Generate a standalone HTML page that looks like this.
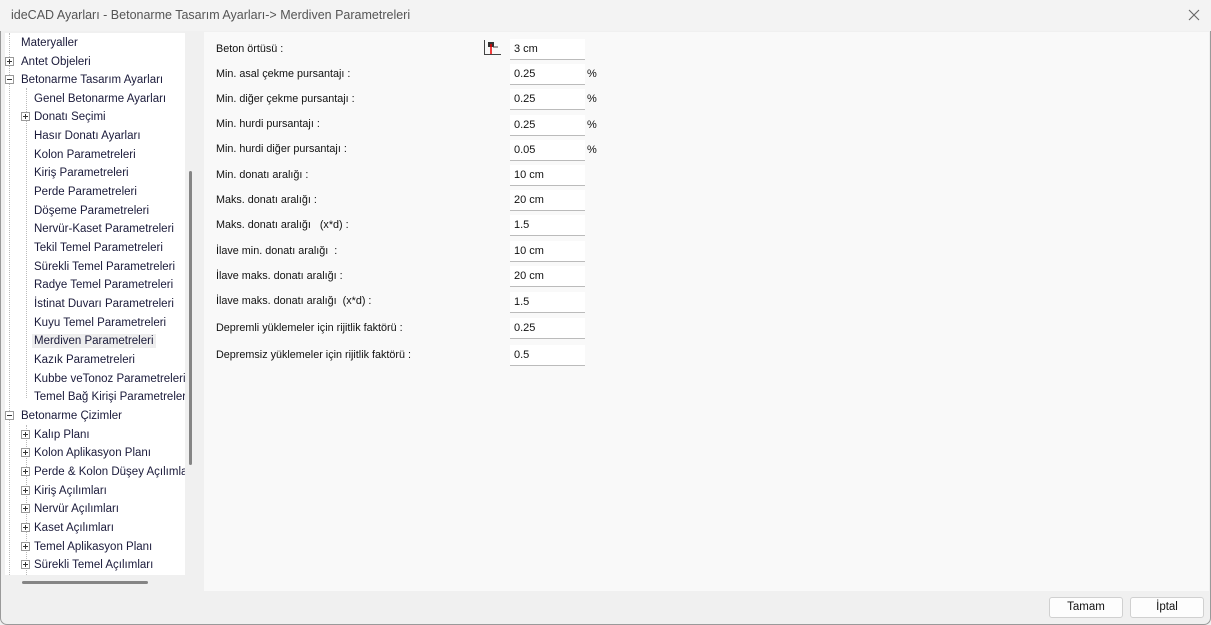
<!DOCTYPE html><html><head><style>
*{margin:0;padding:0;box-sizing:border-box}
body{width:1211px;height:625px;background:#f0f0f0;font-family:"Liberation Sans",sans-serif;position:relative;overflow:hidden;border:1px solid #9a9a9a;border-radius:7px}
#w{position:absolute;left:1px;top:1px;width:1px;height:1px}
.t{position:absolute;white-space:nowrap}
#title{position:absolute;left:-2px;top:-2px;width:1211px;height:31px;background:#f3f3f3}
#tree{position:absolute;left:3px;top:31px;width:180px;height:542px;background:#fff;overflow:hidden;font-size:11.5px;color:#1a1a3a}
#right{position:absolute;left:202px;top:30px;width:1005px;height:559px;background:#f9f9f9}
.ti{position:absolute;white-space:nowrap;margin-top:2px}
.pm{position:absolute;width:9px;height:9px;border:1px solid #999;background:#fff;font-size:0}
.pm:before{content:"";position:absolute;left:1px;top:3px;width:5px;height:1px;background:#333}
.pm.p:after{content:"";position:absolute;left:3px;top:1px;width:1px;height:5px;background:#333}
.lbl{position:absolute;left:214px;font-size:10.8px;color:#111;white-space:nowrap}
.inp{position:absolute;left:508px;width:75px;height:21px;background:#fff;border-bottom:1px solid #bbb;font-size:11px;padding:4px 0 0 4px;color:#111}
.pc{position:absolute;left:585px;font-size:11px;color:#111}
.btn{position:absolute;top:595px;width:74px;height:21px;background:#fdfdfd;border:1px solid #d0d0d0;border-radius:3px;font-size:11.5px;text-align:center;line-height:19px;color:#111}
</style></head><body><div id="w">
<div id="title"><div class="t" style="left:11px;top:8px;font-size:12.5px;color:#555">ideCAD Ayarları - Betonarme Tasarım Ayarları-&gt; Merdiven Parametreleri</div>
<svg style="position:absolute;left:1188px;top:9px" width="12" height="12"><path d="M1 1L11 11M11 1L1 11" stroke="#666" stroke-width="1.1"/></svg></div>
<div id="tree">
<div style="position:absolute;left:4px;top:0;height:542px;border-left:1px dotted #bbb"></div>
<div style="position:absolute;left:21px;top:55px;height:310px;border-left:1px dotted #bbb"></div>
<div style="position:absolute;left:21px;top:392px;height:150px;border-left:1px dotted #bbb"></div>
<div class="ti" style="left:16px;top:2px">Materyaller</div>
<div class="pm p" style="left:0;top:24px"></div><div class="ti" style="left:16px;top:21px">Antet Objeleri</div>
<div class="pm" style="left:0;top:42px"></div><div class="ti" style="left:16px;top:39px">Betonarme Tasarım Ayarları</div>
<div class="ti" style="left:29px;top:58px">Genel Betonarme Ayarları</div>
<div class="pm p" style="left:16px;top:79px"></div><div class="ti" style="left:29px;top:76px">Donatı Seçimi</div>
<div class="ti" style="left:29px;top:95px">Hasır Donatı Ayarları</div>
<div class="ti" style="left:29px;top:114px">Kolon Parametreleri</div>
<div class="ti" style="left:29px;top:132px">Kiriş Parametreleri</div>
<div class="ti" style="left:29px;top:151px">Perde Parametreleri</div>
<div class="ti" style="left:29px;top:170px">Döşeme Parametreleri</div>
<div class="ti" style="left:29px;top:188px">Nervür-Kaset Parametreleri</div>
<div class="ti" style="left:29px;top:207px">Tekil Temel Parametreleri</div>
<div class="ti" style="left:29px;top:226px">Sürekli Temel Parametreleri</div>
<div class="ti" style="left:29px;top:244px">Radye Temel Parametreleri</div>
<div class="ti" style="left:29px;top:263px">İstinat Duvarı Parametreleri</div>
<div class="ti" style="left:29px;top:282px">Kuyu Temel Parametreleri</div>
<div class="ti" style="left:27px;top:299px;background:#eee;padding:1px 2px">Merdiven Parametreleri</div>
<div class="ti" style="left:29px;top:319px">Kazık Parametreleri</div>
<div class="ti" style="left:29px;top:338px">Kubbe veTonoz Parametreleri</div>
<div class="ti" style="left:29px;top:356px">Temel Bağ Kirişi Parametreleri</div>
<div class="pm" style="left:0;top:378px"></div><div class="ti" style="left:16px;top:375px">Betonarme Çizimler</div>
<div class="pm p" style="left:16px;top:397px"></div><div class="ti" style="left:29px;top:394px">Kalıp Planı</div>
<div class="pm p" style="left:16px;top:415px"></div><div class="ti" style="left:29px;top:412px">Kolon Aplikasyon Planı</div>
<div class="pm p" style="left:16px;top:434px"></div><div class="ti" style="left:29px;top:431px">Perde &amp; Kolon Düşey Açılımları</div>
<div class="pm p" style="left:16px;top:453px"></div><div class="ti" style="left:29px;top:450px">Kiriş Açılımları</div>
<div class="pm p" style="left:16px;top:471px"></div><div class="ti" style="left:29px;top:468px">Nervür Açılımları</div>
<div class="pm p" style="left:16px;top:490px"></div><div class="ti" style="left:29px;top:487px">Kaset Açılımları</div>
<div class="pm p" style="left:16px;top:509px"></div><div class="ti" style="left:29px;top:506px">Temel Aplikasyon Planı</div>
<div class="pm p" style="left:16px;top:527px"></div><div class="ti" style="left:29px;top:524px">Sürekli Temel Açılımları</div>
</div>
<div style="position:absolute;left:187px;top:169px;width:3px;height:294px;background:#858585;border-radius:2px"></div>
<div style="position:absolute;left:20px;top:579px;width:126px;height:3px;background:#858585;border-radius:2px"></div>
<div id="right"></div>
<div class="lbl" style="top:41px">Beton örtüsü :</div>
<svg style="position:absolute;left:481px;top:37px" width="20" height="17"><path d="M1.5 1V15.5H18" stroke="#444" fill="none"/><rect x="5" y="3" width="6" height="5" fill="#333"/><path d="M8 5V15" stroke="#e00" stroke-width="1.5"/><path d="M10 8H15" stroke="#444"/></svg>
<div class="inp" style="top:37px">3 cm</div>
<div class="lbl" style="top:66px">Min. asal çekme pursantajı :</div><div class="inp" style="top:62px">0.25</div><div class="pc" style="top:66px">%</div>
<div class="lbl" style="top:91px">Min. diğer çekme pursantajı :</div><div class="inp" style="top:87px">0.25</div><div class="pc" style="top:91px">%</div>
<div class="lbl" style="top:116px">Min. hurdi pursantajı :</div><div class="inp" style="top:113px">0.25</div><div class="pc" style="top:117px">%</div>
<div class="lbl" style="top:141px">Min. hurdi diğer pursantajı :</div><div class="inp" style="top:138px">0.05</div><div class="pc" style="top:142px">%</div>
<div class="lbl" style="top:167px">Min. donatı aralığı :</div><div class="inp" style="top:163px">10 cm</div>
<div class="lbl" style="top:192px">Maks. donatı aralığı :</div><div class="inp" style="top:188px">20 cm</div>
<div class="lbl" style="top:217px">Maks. donatı aralığı &nbsp; (x*d) :</div><div class="inp" style="top:213px">1.5</div>
<div class="lbl" style="top:243px">İlave min. donatı aralığı &nbsp;:</div><div class="inp" style="top:239px">10 cm</div>
<div class="lbl" style="top:268px">İlave maks. donatı aralığı :</div><div class="inp" style="top:264px">20 cm</div>
<div class="lbl" style="top:293px">İlave maks. donatı aralığı &nbsp;(x*d) :</div><div class="inp" style="top:290px">1.5</div>
<div class="lbl" style="top:320px">Depremli yüklemeler için rijitlik faktörü :</div><div class="inp" style="top:316px">0.25</div>
<div class="lbl" style="top:347px">Depremsiz yüklemeler için rijitlik faktörü :</div><div class="inp" style="top:343px">0.5</div>
<div class="btn" style="left:1047px">Tamam</div>
<div class="btn" style="left:1128px">İptal</div>
</div></body></html>
